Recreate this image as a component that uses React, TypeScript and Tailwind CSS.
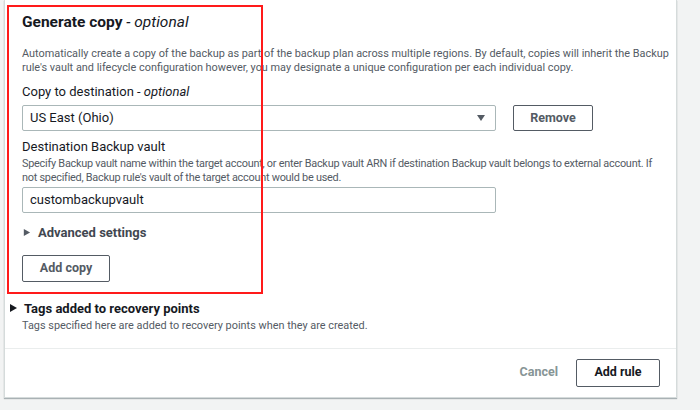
import React from "react";

const font = { fontFamily: 'Roboto, "Noto Sans", Arial, sans-serif' };

function Caret({ className }: { className?: string }) {
  return (
    <svg viewBox="0 0 10 10" className={className} fill="currentColor">
      <polygon points="1,2 9,2 5,8" />
    </svg>
  );
}

function Right({ className }: { className?: string }) {
  return (
    <svg viewBox="0 0 10 10" className={className} fill="currentColor">
      <polygon points="2,1 9,5 2,9" />
    </svg>
  );
}

export default function App() {
  return (
    <div className="w-[700px] h-[410px] bg-[#f2f3f3] overflow-hidden text-[#16191f]" style={font}>
      <div className="relative ml-[4px] w-[673px] h-[398px] bg-white border border-[#d5dbdb] border-t-0 shadow-[0_1px_1px_0_rgba(0,28,36,0.3)]">
        <div className="pl-[17px] pr-4 pt-[12px]">
          <h2 className="text-[15.5px] font-bold leading-[20px]">
            Generate copy <span className="font-normal italic">- optional</span>
          </h2>
          <p className="mt-[15px] text-[10.9px] leading-[14px] text-[#545b64] whitespace-nowrap">
            Automatically create a copy of the backup as part of the backup plan across multiple regions. By default, copies will inherit the Backup
            <br />
            rule's vault and lifecycle configuration however, you may designate a unique configuration per each individual copy.
          </p>
          <div className="mt-[8px] text-[13px] leading-[18px]">
            Copy to destination <span className="italic">- optional</span>
          </div>
          <div className="mt-[4px] flex items-center gap-[17px]">
            <div className="w-[474px] h-[26px] border border-[#aab7b8] rounded-[2px] flex items-center justify-between pl-[7px] pr-[9px] text-[13px]">
              <span>US East (Ohio)</span>
              <Caret className="w-[10px] h-[10px] text-[#545b64]" />
            </div>
            <button className="w-[80px] h-[26px] border border-[#545b64] rounded-[2px] text-[12.5px] font-bold text-[#545b64]">
              Remove
            </button>
          </div>
          <div className="mt-[7px] text-[13px] leading-[18px]">Destination Backup vault</div>
          <p className="mt-[1px] text-[10.9px] leading-[14px] text-[#545b64] whitespace-nowrap tracking-[-0.25px]">
            Specify Backup vault name within the target account, or enter Backup vault ARN if destination Backup vault belongs to external account. If
            <br />
            not specified, Backup rule's vault of the target account would be used.
          </p>
          <div className="mt-[2px] w-[474px] h-[26px] border border-[#aab7b8] rounded-[2px] flex items-center pl-[7px] text-[13px]">
            custombackupvault
          </div>
          <div className="mt-[10px] flex items-center gap-[7px] text-[13px] font-bold text-[#414750]">
            <Right className="w-[9px] h-[9px] text-[#545b64]" />
            <span>Advanced settings</span>
          </div>
          <button className="mt-[12px] w-[88px] h-[27px] border border-[#545b64] rounded-[2px] text-[12.5px] font-bold text-[#545b64]">
            Add copy
          </button>
        </div>
        <div className="mt-[17px] pl-[3px] flex items-center gap-[6px] text-[13px] font-bold text-[#16191f]">
          <Right className="w-[10px] h-[10px] text-[#16191f]" />
          <span>Tags added to recovery points</span>
        </div>
        <p className="pl-[17px] mt-[1px] text-[10.9px] leading-[14px] text-[#545b64]">
          Tags specified here are added to recovery points when they are created.
        </p>
        <div className="mt-[15px] border-t border-[#eaeded] h-[48px] flex items-center justify-end gap-[18px] pr-[16px]">
          <span className="text-[12.5px] font-bold text-[#879596]">Cancel</span>
          <button className="w-[84px] h-[28px] border border-[#545b64] rounded-[2px] text-[12.5px] font-bold text-[#16191f]">
            Add rule
          </button>
        </div>
        <div className="absolute left-[2px] top-[5px] w-[256px] h-[289px] border-2 border-[#ff1a1a] pointer-events-none" />
      </div>
    </div>
  );
}
